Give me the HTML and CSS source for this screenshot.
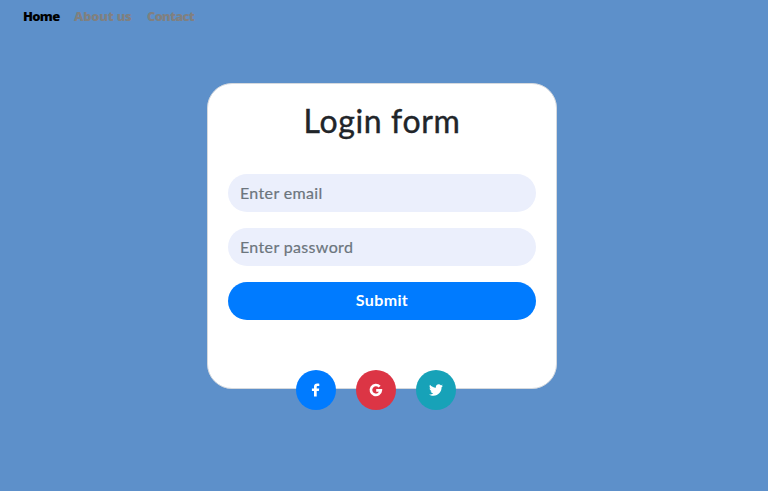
FILE: index.html
```html
<!DOCTYPE html>
<html lang="en">
<head>
<meta charset="utf-8">
<title>Login form</title>
<link rel="stylesheet" href="styles.css">
</head>
<body>
<nav class="nav">
  <a class="nav-link active nav-home">Home</a>
  <a class="nav-link nav-about">About us</a>
  <a class="nav-link nav-contact">Contact</a>
</nav>
<main class="card">
  <h2 class="title">Login form</h2>
  <form class="form">
    <input class="field email" type="email" placeholder="Enter email">
    <input class="field password" type="password" placeholder="Enter password">
    <button class="submit" type="button">Submit</button>
  </form>
  <div class="social">
    <a class="circle facebook"><svg width="16" height="16" viewBox="0 0 16 16"><path d="M11.300 1.700v2.200H9.800c-.9 0-1.100.4-1.100 1.100v1.400h2.500l-.35 2.500H8.700v5.600H6V8.900H3.900V6.400H6V4.500c0-2 1.300-3 3.200-3 .9 0 1.700.1 2.100.2z"/></svg></a>
    <a class="circle google"><svg width="16" height="16" viewBox="0 0 16 16"><path class="stroke" d="M11.600 4.700A4.950 4.950 0 1 0 12.800 8.300H8.200"/></svg></a>
    <a class="circle twitter"><svg width="14" height="14" viewBox="0 0 512 512"><path d="M459.370 151.716c.325 4.548.325 9.097.325 13.645 0 138.720-105.583 298.558-298.558 298.558-59.452 0-114.680-17.219-161.137-47.106 8.447.974 16.568 1.299 25.340 1.299 49.055 0 94.213-16.568 130.274-44.832-46.132-.975-84.792-31.188-98.112-72.772 6.498.974 12.995 1.624 19.818 1.624 9.421 0 18.843-1.300 27.614-3.573-48.081-9.747-84.143-51.980-84.143-102.985v-1.299c13.969 7.797 30.214 12.670 47.431 13.319-28.264-18.843-46.781-51.005-46.781-87.391 0-19.492 5.197-37.360 14.294-52.954 51.655 63.675 129.300 105.258 216.365 109.807-1.624-7.797-2.599-15.918-2.599-24.040 0-57.828 46.782-104.934 104.934-104.934 30.213 0 57.502 12.670 76.670 33.137 23.715-4.548 46.456-13.320 66.599-25.340-7.798 24.366-24.366 44.833-46.132 57.827 21.117-2.273 41.584-8.122 60.426-16.243-14.292 20.791-32.161 39.308-52.628 54.253z"/></svg></a>
  </div>
</main>
</body>
</html>
```
FILE: styles.css
```css
* { box-sizing: border-box; }
body {
  margin: 0;
  height: 491px;
  overflow: hidden;
  background: #5d90ca;
  font-family: Lato, sans-serif;
  font-size: 16px;
  color: #212529;
}
.nav {
  display: flex;
  height: 32px;
  padding-left: 23px;
  font: 900 13px/32px "Noto Sans", sans-serif;
}
.nav-link { color: gray; white-space: nowrap; }
.nav-link.active { color: #000; }
.nav-home { width: 51px; letter-spacing: -0.7px; }
.nav-about { width: 73px; letter-spacing: -0.25px; }
.nav-contact { letter-spacing: -0.8px; }
.card {
  width: 350px;
  height: 306px;
  margin: 51px 0 0 207px;
  padding: 18px 20px 0;
  background: #fff;
  border: 1px solid #d5d9de;
  border-radius: 25px;
}
.title {
  margin: 0;
  height: 72px;
  font-size: 32px;
  font-weight: 400;
  line-height: 38px;
  letter-spacing: 0.65px;
  text-align: center;
  -webkit-text-stroke: 0.4px #212529;
}
.form { display: grid; gap: 16px; }
.field, .submit {
  width: 100%;
  height: 38px;
  padding: 5px 12px 7px;
  border: 0;
  border-radius: 19px;
  font-family: Lato, sans-serif;
  font-size: 16px;
  letter-spacing: 0.35px;
  line-height: 24px;
}
.field { background: #ebeffc; }
.field::placeholder { color: #6c757d; opacity: 1; -webkit-text-stroke: 0.2px #6c757d; }
.submit { background: #007bff; color: #fff; font-weight: 700; }
.social {
  display: flex;
  gap: 20px;
  margin: 50px 0 0 68px;
}
.circle {
  display: flex;
  align-items: center;
  justify-content: center;
  width: 40px;
  height: 40px;
  border-radius: 50%;
}
.circle svg { fill: #fff; }
.circle .stroke { fill: none; stroke: #fff; stroke-width: 2.700; }
.facebook { background: #007bff; }
.google { background: #dc3545; }
.twitter { background: #17a2b8; }
```
